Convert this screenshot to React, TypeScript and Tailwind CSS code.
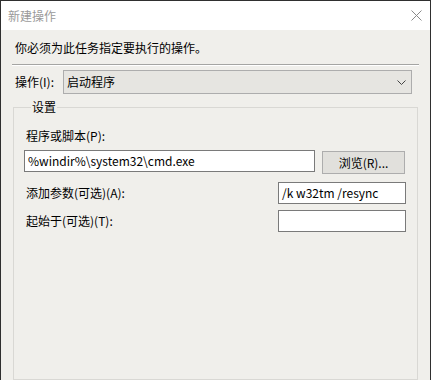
import React from 'react';

const font = "font-['Noto_Sans_CJK_SC','Noto_Sans',sans-serif]";

const TextBox: React.FC<{ value?: string; className?: string }> = ({ value, className }) => (
    <div className={`h-[22px] bg-white border border-[#7a7a7a] flex items-center px-[3px] text-[12px] text-black ${className ?? ''}`}>
        {value}
    </div>
);

const App: React.FC = () => {
    return (
        <div className={`w-[431px] h-[380px] flex flex-col border border-b-0 border-[#2f2f2f] overflow-hidden ${font}`}>
            {/* Title bar */}
            <div className="h-[29px] shrink-0 bg-white flex items-center justify-between pl-[7px] pr-[8px]">
                <span className="text-[12px] text-[#9a9a9a]">新建操作</span>
                <svg width="11" height="11" viewBox="0 0 11 11" className="mt-[-1px]">
                    <path d="M0.5 0.5 L10.5 10.5 M10.5 0.5 L0.5 10.5" stroke="#8a8a8a" strokeWidth="1" fill="none" />
                </svg>
            </div>

            {/* Body */}
            <div className="flex-1 bg-[#f0efeb] flex flex-col pl-[11px] pr-[11px]">
                <div className="mt-[10px] pl-[3px] text-[12px] leading-[16px] text-black">
                    你必须为此任务指定要执行的操作。
                </div>
                <div className="mt-[8px] h-[2px] border-t border-[#a5a5a3] border-b border-b-white" />

                <div className="mt-[4px] flex items-center">
                    <span className="w-[51px] pl-[3px] text-[12px] text-black">操作(I):</span>
                    <div className="w-[349px] h-[24px] bg-[#e6e5e1] border border-[#adadad] flex items-center justify-between pl-[3px] pr-[5px] text-[12px] text-black">
                        <span>启动程序</span>
                        <svg width="9" height="5" viewBox="0 0 9 5">
                            <path d="M0.5 0.5 L4.5 4.5 L8.5 0.5" stroke="#444" strokeWidth="1" fill="none" />
                        </svg>
                    </div>
                </div>

                {/* Settings group */}
                <fieldset className="mt-[6px] ml-[1px] w-[405px] flex-1 border border-[#d9d8d4] pl-[10px] pr-[11px] pb-[10px]">
                    <legend className="ml-[7px] px-[1px] text-[12px] leading-[14px] text-black">设置</legend>
                    <div className="mt-[14px] pl-[2px] text-[12px] leading-[16px] text-black">程序或脚本(P):</div>
                    <div className="mt-[6px] flex items-start">
                        <TextBox value="%windir%\system32\cmd.exe" className="w-[291px]" />
                        <div className="ml-[7px] mt-[1px] w-[83px] h-[23px] bg-[#e1e0dc] border border-[#adadad] flex items-center justify-center text-[12px] text-black">
                            浏览(R)...
                        </div>
                    </div>
                    <div className="mt-[8px] flex items-center justify-between">
                        <span className="pl-[2px] text-[12px] text-black">添加参数(可选)(A):</span>
                        <TextBox value="/k w32tm /resync" className="w-[128px]" />
                    </div>
                    <div className="mt-[6px] flex items-center justify-between">
                        <span className="pl-[2px] text-[12px] text-black">起始于(可选)(T):</span>
                        <TextBox className="w-[128px]" />
                    </div>
                </fieldset>
            </div>
        </div>
    );
};

export default App;
